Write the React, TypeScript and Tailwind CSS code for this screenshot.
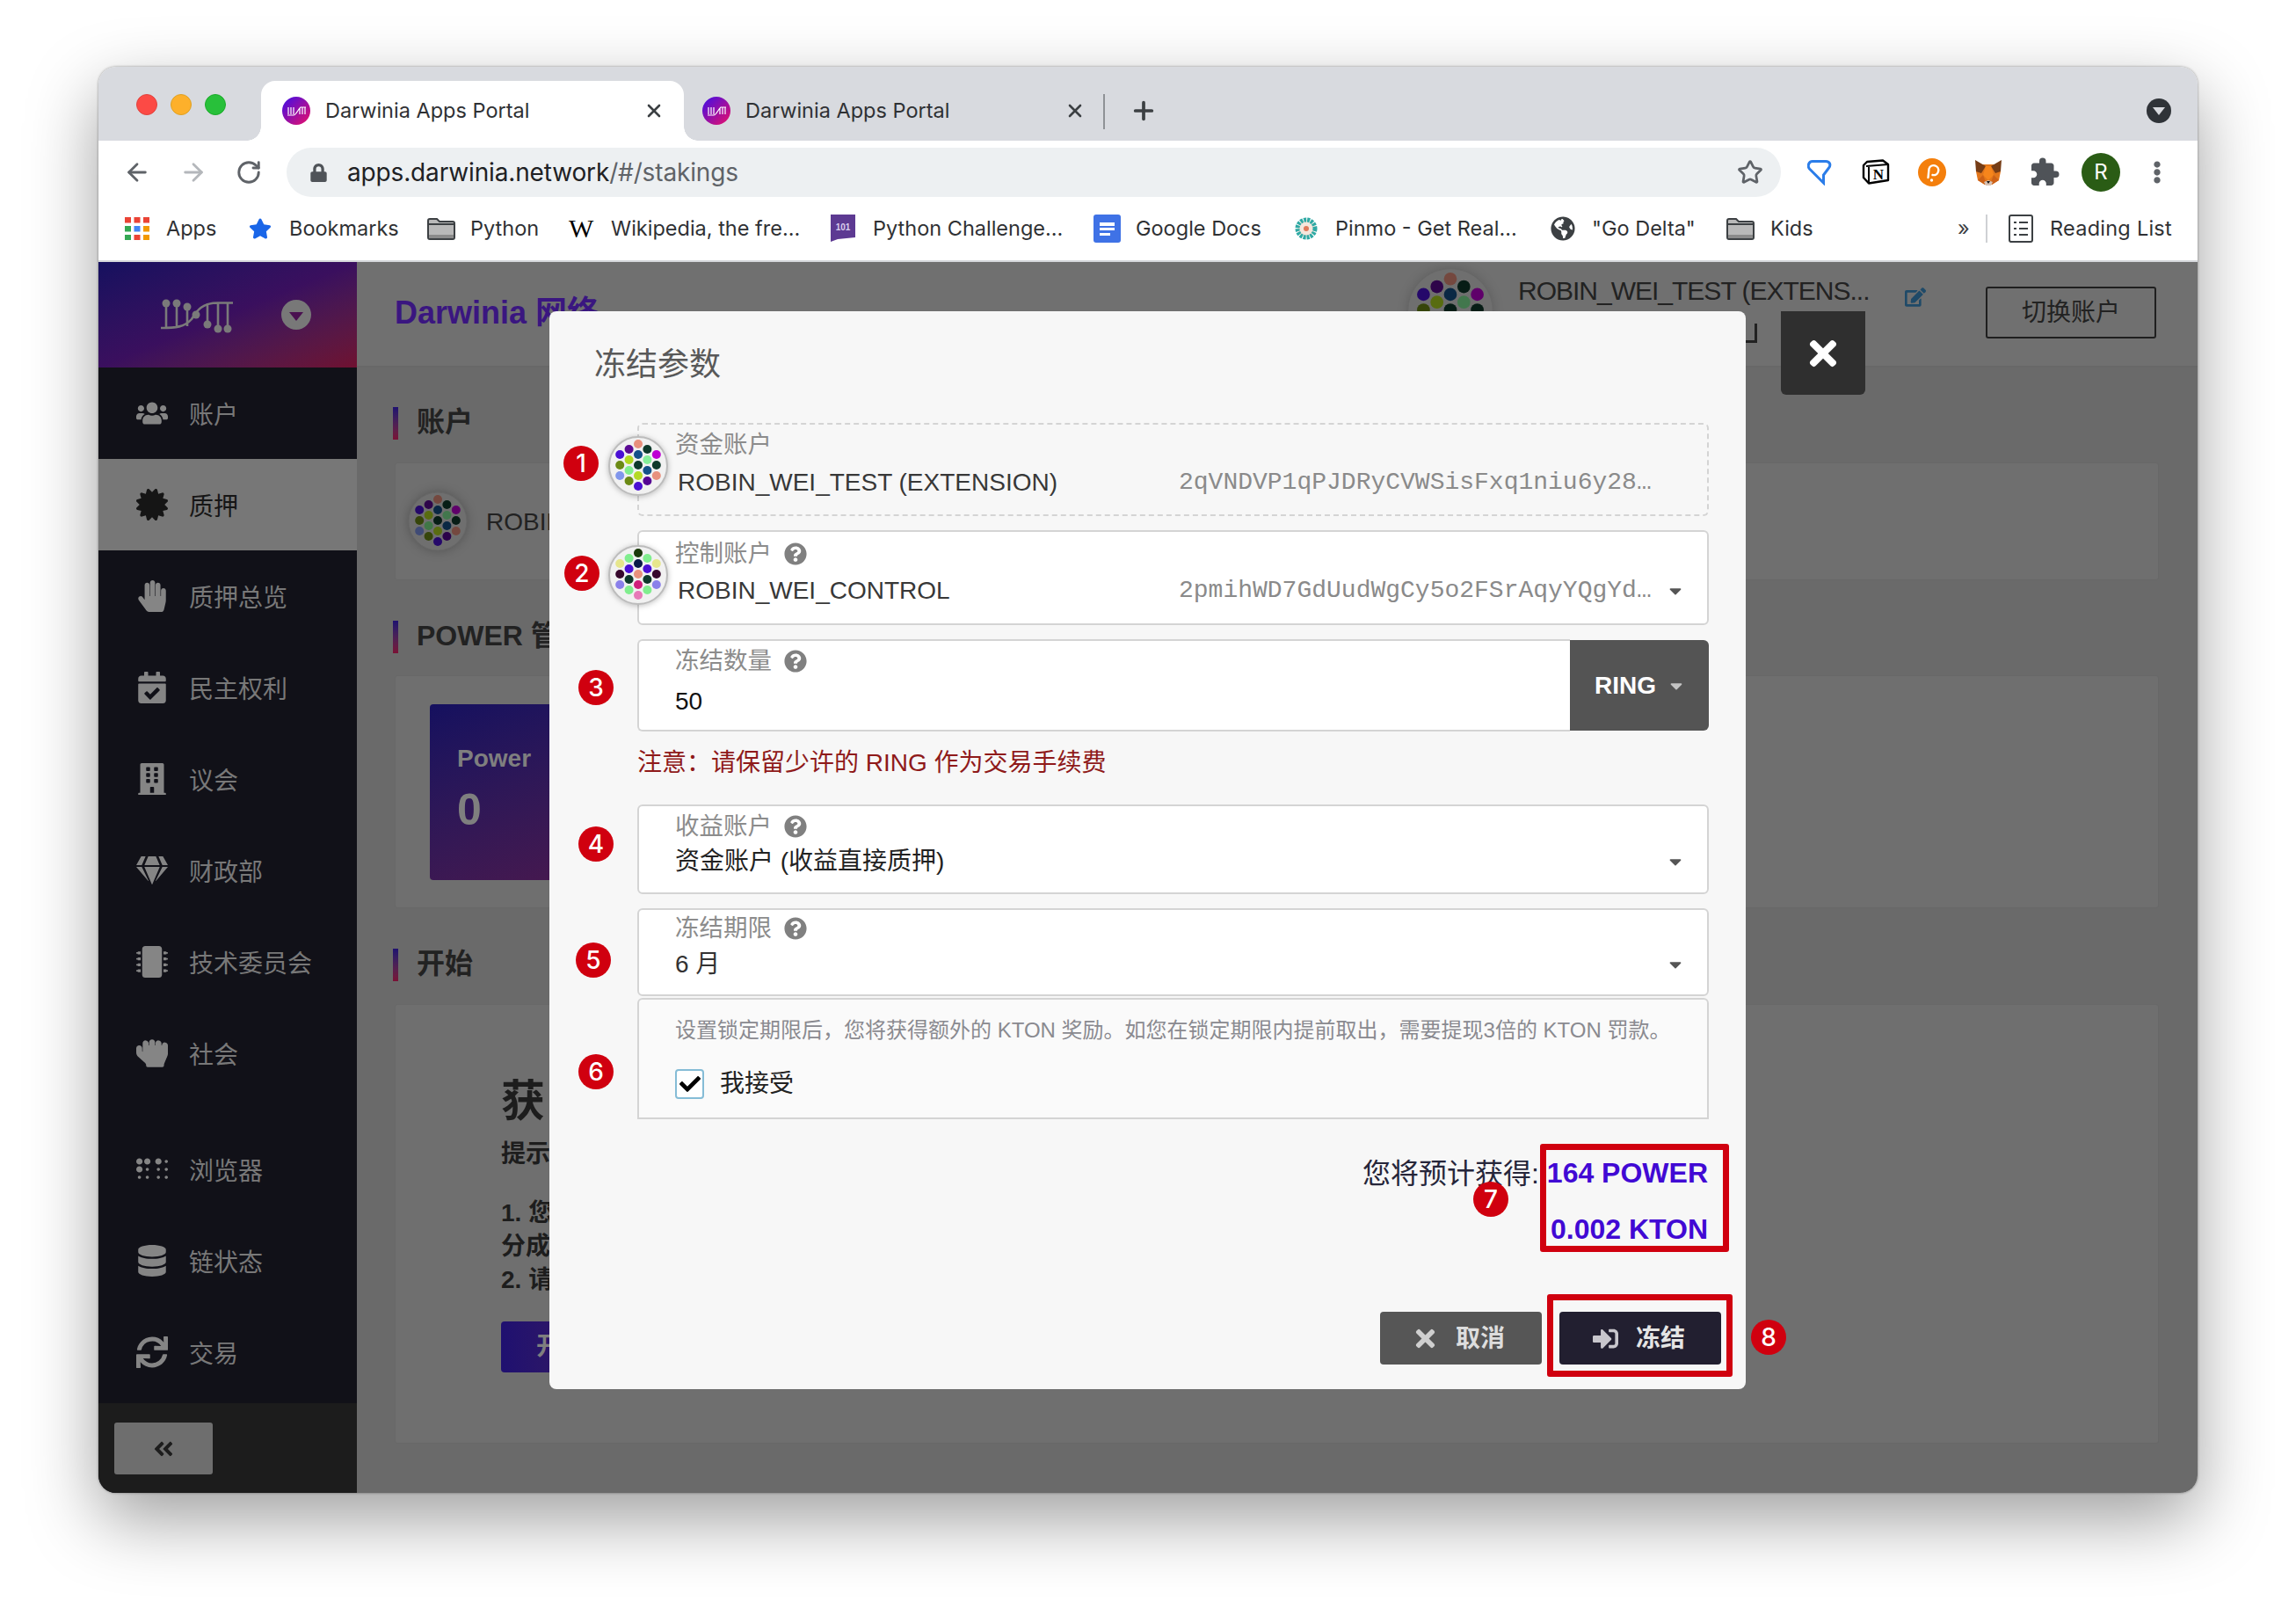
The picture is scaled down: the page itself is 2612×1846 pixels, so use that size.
import React from 'react';
import { ArrowLeft, ArrowRight, RotateCw, Star, X, Plus } from 'lucide-react';
import {
  FaUsers, FaCertificate, FaHandPaper, FaCalendarCheck, FaBuilding, FaGem, FaMicrochip, FaHandRock,
  FaBraille, FaDatabase, FaSync, FaAngleDoubleLeft, FaQuestionCircle, FaTimes, FaSignInAlt, FaEdit,
  FaCheck, FaCaretDown, FaStar, FaLock, FaGlobeAmericas, FaEllipsisV,
} from 'react-icons/fa';
import { MdExtension } from 'react-icons/md';

const DOT_POS: [number, number][] = [
  [34, 9], [34, 21], [34, 33], [34, 45], [34, 57],
  [23.6, 15], [23.6, 27], [23.6, 39], [23.6, 51],
  [44.4, 15], [44.4, 27], [44.4, 39], [44.4, 51],
  [13.2, 21], [13.2, 33], [13.2, 45],
  [54.8, 21], [54.8, 33], [54.8, 45],
];

const AVATAR_A = [
  '#e8917d', '#135189', '#0e3a2b', '#b4d925', '#4a0fd4',
  '#5b0a94', '#b0d820', '#80ee8e', '#6b8a15',
  '#0e3a2b', '#85ee9a', '#135189', '#560494',
  '#4a0fd4', '#6b8a15', '#8096ec',
  '#be00d4', '#0e3a2b', '#e8917d',
];

const AVATAR_B = [
  '#1a3a0a', '#0a1a4a', '#e8917d', '#d0207a', '#e77ab8',
  '#80ee8e', '#4a0fd4', '#0e3a2b', '#80ee8e',
  '#80ee8e', '#4a0fd4', '#0e3a2b', '#80ee8e',
  '#e6e68c', '#37082c', '#8a80ea',
  '#e6e68c', '#37082c', '#8a80ea',
];

function Identicon({ colors, className, dim }: { colors: string[]; className: string; dim?: boolean }) {
  return (
    <svg viewBox="0 0 68 68" className={className}>
      {dim ? (
        <circle cx="34" cy="34" r="33" fill="#6f6f6f" stroke="#676767" strokeWidth="1" />
      ) : (
        <circle cx="34" cy="34" r="33" fill="#f1f1f1" stroke="#bcbcbc" strokeWidth="2" />
      )}
      <g className={dim ? 'brightness-[0.5]' : ''}>
        {DOT_POS.map(([x, y], i) => (
          <circle key={i} cx={x} cy={y} r="5" fill={colors[i]} />
        ))}
      </g>
    </svg>
  );
}

function Favicon({ id }: { id: string }) {
  return (
    <svg viewBox="0 0 32 32" className="w-[32px] h-[32px] shrink-0">
      <defs>
        <linearGradient id={id} x1="0" y1="0" x2="1" y2="1">
          <stop offset="0" stopColor="#3d0ee8" />
          <stop offset="1" stopColor="#ec1068" />
        </linearGradient>
      </defs>
      <circle cx="16" cy="16" r="16" fill={`url(#${id})`} />
      <path d="M7 12v8M10 12v8M13 12v8M6 21h7c3 0 5-7 8-9h6M20 13v7M23 12v8M26 12v8" stroke="#fff" strokeWidth="1.2" fill="none" />
    </svg>
  );
}

function FolderIcon() {
  return (
    <svg viewBox="0 0 32 26" className="w-[32px] h-[26px] shrink-0">
      <path d="M1 4a2 2 0 0 1 2-2h8l3 3h15a2 2 0 0 1 2 2v16a2 2 0 0 1-2 2H3a2 2 0 0 1-2-2z" fill="#b9b9b9" stroke="#3c4043" strokeWidth="2" />
      <path d="M1 8h30" stroke="#3c4043" strokeWidth="2" />
      <path d="M2 20h28v4H2z" fill="#8b8b8b" />
    </svg>
  );
}

function AppsIcon() {
  const colors = ['#ea4335', '#ea4335', '#ea4335', '#34a853', '#4285f4', '#f29900', '#34a853', '#ea4335', '#f29900'];
  return (
    <svg viewBox="0 0 28 26" className="w-[28px] h-[26px] shrink-0">
      {colors.map((c, i) => (
        <rect key={i} x={(i % 3) * 10.5} y={Math.floor(i / 3) * 10} width="7" height="6.5" fill={c} />
      ))}
    </svg>
  );
}

function DocsIcon() {
  return (
    <svg viewBox="0 0 31 32" className="w-[31px] h-[32px] shrink-0">
      <rect width="31" height="32" rx="3" fill="#3f72e6" />
      <path d="M7 9h17v4H7zM7 15h17v3H7zM7 21h12v3H7z" fill="#fff" />
    </svg>
  );
}

function PinmoIcon() {
  return (
    <svg viewBox="0 0 26 28" className="w-[26px] h-[28px] shrink-0">
      <circle cx="13" cy="14" r="10" fill="#f5e6dc" stroke="#2fa9a4" strokeWidth="5" strokeDasharray="3 1" />
      <circle cx="13" cy="14" r="3" fill="#e0795a" />
    </svg>
  );
}

function PythonIcon() {
  return (
    <svg viewBox="0 0 28 32" className="w-[28px] h-[32px] shrink-0">
      <path d="M0 0h28v26l-20 2-8 3z" fill="#5d3a92" />
      <text x="14" y="18" textAnchor="middle" fontSize="10" fontWeight="700" fill="#d9cdec" fontFamily="Liberation Sans, sans-serif">101</text>
    </svg>
  );
}

function ReadingIcon() {
  return (
    <svg viewBox="0 0 28 32" className="w-[28px] h-[32px] shrink-0" fill="none" stroke="#3c4043" strokeWidth="2">
      <rect x="1" y="1" width="26" height="30" rx="2" />
      <path d="M6 9h3M12 9h10M6 16h3M12 16h10M6 23h3M12 23h10" />
    </svg>
  );
}

function PinExt() {
  return (
    <svg viewBox="0 0 28 29" className="w-[28px] h-[29px]" fill="none" stroke="#2b7de9" strokeWidth="3">
      <path d="M6 1.5H21C26 1.5 27 6 24.5 9L18.5 17V26L2.5 10C0 7 1.5 1.5 6 1.5Z" />
    </svg>
  );
}

function NotionExt() {
  return (
    <svg viewBox="0 0 32 30" className="w-[32px] h-[30px]">
      <path d="M6 3L24 1.5L30 6V24L8 27.5L2 21V7Z" fill="#fff" stroke="#000" strokeWidth="2.4" strokeLinejoin="round" />
      <path d="M5 8L30 6M8 27V9" stroke="#000" strokeWidth="2" fill="none" />
      <text x="19" y="23" textAnchor="middle" fontSize="17" fontWeight="700" fill="#000" fontFamily="Liberation Serif, serif">N</text>
    </svg>
  );
}

function PolkaExt() {
  return (
    <svg viewBox="0 0 32 32" className="w-[32px] h-[32px]">
      <circle cx="16" cy="16" r="16" fill="#f47f0c" />
      <path d="M11.5 22L12.5 12a5.5 5.5 0 1 1 4 7" stroke="#fff" strokeWidth="2.4" fill="none" strokeLinecap="round" />
      <circle cx="15.5" cy="25" r="1.7" fill="#fff" />
    </svg>
  );
}

function FoxExt() {
  return (
    <svg viewBox="0 0 32 30" className="w-[32px] h-[30px]">
      <path d="M2 14L8 6H24L30 14L28 24L20 29H12L4 24Z" fill="#e2761b" />
      <path d="M1 1L13 8L8 16L2 14ZM31 1L19 8L24 16L30 14Z" fill="#763d16" />
      <path d="M13 8H19L22 18L16 24L10 18Z" fill="#f6851b" />
      <path d="M4 24L10 18L13 26L12 29ZM28 24L22 18L19 26L20 29Z" fill="#cd6116" />
      <path d="M11 26L16 24L21 26L19 30H13Z" fill="#d7c1b3" />
      <path d="M14 25H18L16 28Z" fill="#161616" />
    </svg>
  );
}

function LogoMark() {
  return (
    <svg viewBox="0 0 90 45" className="w-[90px] h-[45px]" fill="none" stroke="#7a7a7a" strokeWidth="2.6">
      <path d="M9 9V37M21 9V37M33 13V35M56 9V33M68 9V38M79 9V38M3 37C20 37 30 36 38 27C44 17 50 8.5 68 8.5H85" />
      <g fill="#7a7a7a" stroke="none">
        <circle cx="9" cy="9" r="4.5" />
        <circle cx="21" cy="9" r="4.5" />
        <circle cx="33" cy="13" r="4.5" />
        <circle cx="43" cy="22" r="4.5" />
        <circle cx="56" cy="33" r="4.5" />
        <circle cx="68" cy="38" r="4.5" />
        <circle cx="79" cy="38" r="4.5" />
      </g>
    </svg>
  );
}

const BOOKMARKS = [
  { icon: <AppsIcon />, label: 'Apps', width: 'w-[141px]', gap: 'gap-[19px]' },
  { icon: <FaStar className="text-[#1a66e8] text-[26px] shrink-0" />, label: 'Bookmarks', width: 'w-[203px]', gap: 'gap-[20px]' },
  { icon: <FolderIcon />, label: 'Python', width: 'w-[161px]', gap: 'gap-[17px]' },
  { icon: <span className="w-[30px] font-['Liberation_Serif',serif] text-[30px] text-black shrink-0">W</span>, label: 'Wikipedia, the fre...', width: 'w-[298px]', gap: 'gap-[18px]' },
  { icon: <PythonIcon />, label: 'Python Challenge...', width: 'w-[299px]', gap: 'gap-[20px]' },
  { icon: <DocsIcon />, label: 'Google Docs', width: 'w-[229px]', gap: 'gap-[17px]' },
  { icon: <PinmoIcon />, label: 'Pinmo - Get Real...', width: 'w-[291px]', gap: 'gap-[20px]' },
  { icon: <FaGlobeAmericas className="text-[#3c4043] text-[28px] shrink-0" />, label: '"Go Delta"', width: 'w-[200px]', gap: 'gap-[19px]' },
  { icon: <FolderIcon />, label: 'Kids', width: 'w-[270px]', gap: 'gap-[18px]' },
];

const NAV = [
  { icon: <FaUsers />, label: '账户' },
  { icon: <FaCertificate />, label: '质押', active: true },
  { icon: <FaHandPaper />, label: '质押总览' },
  { icon: <FaCalendarCheck />, label: '民主权利' },
  { icon: <FaBuilding />, label: '议会' },
  { icon: <FaGem />, label: '财政部' },
  { icon: <FaMicrochip />, label: '技术委员会' },
  { icon: <FaHandRock />, label: '社会' },
  { icon: <FaBraille />, label: '浏览器', spaced: true },
  { icon: <FaDatabase />, label: '链状态' },
  { icon: <FaSync />, label: '交易' },
];

const BADGES = [
  { n: 1, pos: 'left-[16px] top-[153px]' },
  { n: 2, pos: 'left-[17px] top-[278px]' },
  { n: 3, pos: 'left-[33px] top-[408px]' },
  { n: 4, pos: 'left-[33px] top-[586px]' },
  { n: 5, pos: 'left-[30px] top-[718px]' },
  { n: 6, pos: 'left-[33px] top-[845px]' },
  { n: 7, pos: 'left-[1051px] top-[990px]' },
  { n: 8, pos: 'left-[1367px] top-[1147px]' },
];

function Help() {
  return <FaQuestionCircle className="text-[#808080] text-[26px] ml-[14px] shrink-0" />;
}

function Caret({ className }: { className: string }) {
  return <FaCaretDown className={`text-[22px] shrink-0 ${className}`} />;
}

function Label({ text, help }: { text: string; help?: boolean }) {
  return (
    <div className="flex items-center h-[30px] text-[27.5px] text-[#8c8c8c] leading-none">
      {text}
      {help && <Help />}
    </div>
  );
}

function SectionTitle({ title }: { title: string }) {
  return (
    <div className="flex items-center h-[37px] gap-[21px] overflow-hidden whitespace-nowrap">
      <div className="w-[6px] h-[37px] bg-gradient-to-b from-[#1f1070] to-[#7a1035]" />
      <span className="text-[32px] font-bold text-[#222222] pb-[3px]">{title}</span>
    </div>
  );
}

export default function App() {
  return (
    <div className="w-[2612px] h-[1846px] bg-white pt-[76px] pl-[112px] font-['Liberation_Sans','Noto_Sans_CJK_SC',sans-serif] overflow-hidden">
      <div className="relative w-[2388px] h-[1622px] rounded-[20px] flex flex-col shadow-[0_30px_80px_rgba(0,0,0,0.38),0_0_3px_rgba(0,0,0,0.4)] bg-white">
        {/* tab strip */}
        <div className="h-[84px] bg-[#d8dadf] rounded-t-[20px] flex items-end font-['Inter','Noto_Sans_CJK_SC',sans-serif] text-[23.5px] text-[#2f3134] shrink-0">
          <div className="w-[185px] h-[68px] pb-[14px] pl-[43px] flex items-center gap-[15px]">
            <div className="w-[24px] h-[24px] rounded-full bg-[#fc4a45] border border-[#e0443e]" />
            <div className="w-[24px] h-[24px] rounded-full bg-[#fdb02b] border border-[#dea123]" />
            <div className="w-[24px] h-[24px] rounded-full bg-[#28c03a] border border-[#1aab29]" />
          </div>
          <div className="relative w-[481px] h-[68px] bg-white rounded-t-[16px] flex items-center pl-[24px] pr-[22px]">
            <div className="absolute -left-[16px] bottom-0 w-[16px] h-[16px] bg-[radial-gradient(circle_at_0_0,transparent_15.5px,white_16px)]" />
            <div className="absolute -right-[16px] bottom-0 w-[16px] h-[16px] bg-[radial-gradient(circle_at_100%_0,transparent_15.5px,white_16px)]" />
            <Favicon id="fav-a" />
            <span className="ml-[17px]">Darwinia Apps Portal</span>
            <X className="ml-auto w-[24px] h-[24px] text-[#3c4043]" strokeWidth={2.6} />
          </div>
          <div className="w-[477px] h-[68px] flex items-center pl-[21px] pr-[20px]">
            <Favicon id="fav-b" />
            <span className="ml-[17px]">Darwinia Apps Portal</span>
            <X className="ml-auto w-[24px] h-[24px] text-[#3c4043]" strokeWidth={2.6} />
          </div>
          <div className="w-[2px] h-[40px] bg-[#8f9296] mb-[13px]" />
          <div className="h-[68px] flex items-center ml-[28px]">
            <Plus className="w-[32px] h-[32px] text-[#3c4043]" strokeWidth={2.8} />
          </div>
          <div className="ml-auto h-[68px] pr-[30px] flex items-center">
            <div className="w-[28px] h-[28px] rounded-full bg-[#2f3338] flex items-center justify-center">
              <div className="w-0 h-0 border-l-[7px] border-r-[7px] border-t-[9px] border-l-transparent border-r-transparent border-t-[#d8dadf]" />
            </div>
          </div>
        </div>

        {/* toolbar */}
        <div className="h-[72px] bg-white flex items-center shrink-0 font-['Inter','Noto_Sans_CJK_SC',sans-serif]">
          <div className="pl-[28px] flex items-center gap-[32px]">
            <ArrowLeft className="w-[32px] h-[32px] text-[#5f6368]" strokeWidth={2.1} />
            <ArrowRight className="w-[32px] h-[32px] text-[#b4b7bb]" strokeWidth={2.1} />
            <RotateCw className="w-[30px] h-[30px] text-[#5f6368]" strokeWidth={2.3} />
          </div>
          <div className="ml-[28px] w-[1700px] h-[56px] rounded-[28px] bg-[#edf0f2] flex items-center pl-[26px] pr-[20px]">
            <FaLock className="text-[#4f5358] text-[21px] shrink-0" />
            <span className="ml-[22px] text-[28px] tracking-[-0.15px] text-[#202124]">
              apps.darwinia.network<span className="text-[#5f6368]">/#/stakings</span>
            </span>
            <Star className="ml-auto w-[30px] h-[30px] text-[#5f6368]" strokeWidth={2.2} />
          </div>
          <div className="ml-[12px] flex items-center">
            <div className="w-[64px] flex justify-center"><PinExt /></div>
            <div className="w-[64px] flex justify-center"><NotionExt /></div>
            <div className="w-[64px] flex justify-center"><PolkaExt /></div>
            <div className="w-[64px] flex justify-center"><FoxExt /></div>
            <div className="w-[64px] flex justify-center"><MdExtension className="text-[#4f5358] text-[36px]" /></div>
            <div className="w-[64px] flex justify-center">
              <div className="w-[44px] h-[44px] rounded-full bg-[#2a5c15] text-white text-[24px] leading-[44px] text-center">R</div>
            </div>
            <div className="w-[64px] flex justify-center"><FaEllipsisV className="text-[#5f6368] text-[26px]" /></div>
          </div>
        </div>

        {/* bookmarks */}
        <div className="h-[66px] bg-white border-b-2 border-[#d5d7db] flex items-center pl-[30px] pb-[9px] text-[23.5px] text-[#2f3134] font-['Inter','Noto_Sans_CJK_SC',sans-serif] whitespace-nowrap shrink-0">
          {BOOKMARKS.map((b) => (
            <div key={b.label} className={`flex items-center ${b.width} ${b.gap}`}>
              {b.icon}
              <span>{b.label}</span>
            </div>
          ))}
          <span className="ml-[-7px] w-[30px] text-[#3c4043]">»</span>
          <div className="w-[2px] h-[32px] bg-[#cfd1d4] ml-[2px]" />
          <div className="ml-[24px] flex items-center gap-[19px]">
            <ReadingIcon />
            <span className="tracking-[0.25px]">Reading List</span>
          </div>
        </div>

        {/* page */}
        <div className="flex flex-1 min-h-0 overflow-hidden rounded-b-[20px]">
          <div className="w-[294px] bg-[#111118] flex flex-col shrink-0">
            <div className="h-[120px] bg-gradient-to-br from-[#15105f] via-[#3a0f5e] to-[#6f1030] flex items-center shrink-0">
              <div className="ml-[68px]"><LogoMark /></div>
              <div className="ml-[50px] w-[34px] h-[34px] rounded-full bg-[#787878] flex items-center justify-center">
                <div className="w-0 h-0 mt-[3px] border-l-[8px] border-r-[8px] border-t-[10px] border-l-transparent border-r-transparent border-t-[#4a1050]" />
              </div>
            </div>
            {NAV.map((item) => (
              <div
                key={item.label}
                className={`flex items-center h-[104px] shrink-0 text-[28px] ${item.active ? 'bg-[#777777] text-[#161616]' : 'text-[#787878]'} ${item.spaced ? 'mt-[28px]' : ''}`}
              >
                <div className={`w-[54px] ml-[34px] flex justify-center text-[36px] ${item.active ? 'text-[#151515]' : 'text-[#858585]'}`}>
                  {item.icon}
                </div>
                <span className="ml-[15px] pt-[5px]">{item.label}</span>
              </div>
            ))}
            <div className="mt-auto h-[102px] bg-[#1c1c1c] pl-[18px] pt-[22px]">
              <div className="w-[112px] h-[59px] bg-[#6e6e6e] rounded-[3px] flex items-center justify-center">
                <FaAngleDoubleLeft className="text-[#1d1d1d] text-[26px]" />
              </div>
            </div>
          </div>

          <div className="flex-1 bg-[#6a6a6a] flex flex-col min-w-0">
            <div className="h-[120px] bg-[#707070] border-b-2 border-[#686868] flex shrink-0">
              <span className="self-center ml-[43px] text-[36px] font-bold text-[#3a1680] mb-[2px] whitespace-nowrap">Darwinia 网络</span>
              <div className="ml-auto flex items-start">
                <Identicon dim colors={AVATAR_A} className="w-[100px] h-[100px] mt-[6px] drop-shadow-[0_0_6px_rgba(0,0,0,0.15)]" />
                <div className="ml-[27px] w-[400px] mt-[13px]">
                  <div className="h-[40px] text-[30px] leading-[40px] text-[#222222] tracking-[-1px] whitespace-nowrap">ROBIN_WEI_TEST (EXTENS...</div>
                  <div className="ml-[258px] mt-[17px] w-[14px] h-[22px] border-r-[3px] border-b-[3px] border-[#222222]" />
                </div>
                <FaEdit className="ml-[40px] mt-[28px] text-[#1f4a68] text-[24px]" />
                <div className="ml-[68px] mr-[47px] mt-[28px] w-[194px] h-[59px] border-2 border-[#1f1f1f] rounded-[3px] flex items-center justify-center text-[28px] text-[#222222]">
                  切换账户
                </div>
              </div>
            </div>
            <div className="pl-[41px] pr-[44px] pt-[45px] flex flex-col">
              <SectionTitle title="账户" />
              <div className="ml-[2px] mt-[26px] h-[134px] bg-[#6f6f6f] border border-[#686868] rounded-[3px] flex items-center pl-[14px]">
                <Identicon dim colors={AVATAR_A} className="w-[68px] h-[68px] drop-shadow-[0_0_6px_rgba(0,0,0,0.25)]" />
                <span className="ml-[21px] pt-[2px] text-[28px] text-[#222222]">ROBIN_WEI_TEST</span>
              </div>
              <div className="mt-[46px]"><SectionTitle title="POWER 管理" /></div>
              <div className="ml-[2px] mt-[25px] h-[265px] bg-[#6f6f6f] border border-[#686868] rounded-[3px] pl-[39px] pt-[32px]">
                <div className="w-[520px] h-[200px] rounded-[4px] bg-gradient-to-br from-[#15105f] to-[#5f1045] pl-[31px] pt-[44px] flex flex-col">
                  <span className="text-[28px] font-bold text-[#7f7f7f] leading-[36px]">Power</span>
                  <span className="text-[50px] font-bold text-[#7f7f7f] leading-[60px] mt-[10px]">0</span>
                </div>
              </div>
              <div className="mt-[46px]"><SectionTitle title="开始" /></div>
              <div className="ml-[2px] mt-[26px] h-[500px] bg-[#6f6f6f] border border-[#686868] rounded-[3px] pl-[120px] pt-[80px] text-[#1d1d1d] font-bold">
                <div className="text-[50px] leading-[60px]">获</div>
                <div className="text-[28px] leading-[36px] mt-[12px]">提示</div>
                <div className="text-[28px] leading-[38px] mt-[30px]">
                  1. 您<br />
                  分成<br />
                  2. 请
                </div>
                <div className="mt-[28px] w-[300px] h-[58px] rounded-[4px] bg-gradient-to-r from-[#1f1070] to-[#5f1045] text-[#7f7f7f] text-[28px] leading-[58px] pl-[40px]">
                  开始
                </div>
              </div>
            </div>
          </div>
        </div>

        {/* modal close button */}
        <div className="absolute left-[1914px] top-[278px] w-[96px] h-[95px] bg-[#2f2f2f] rounded-b-[6px] flex items-center justify-center">
          <FaTimes className="text-white text-[44px]" />
        </div>

        {/* modal */}
        <div className="absolute left-[513px] top-[278px] w-[1361px] h-[1226px] bg-[#f7f7f7] rounded-[8px] text-[#333333]">
          <div className="h-[127px] pl-[51px] pt-[35px] text-[36px] leading-[52px] text-[#595959]">冻结参数</div>

          <div className="ml-[100px] w-[1219px] flex flex-col">
            <div className="h-[106px] rounded-[6px] border-2 border-dashed border-[#d4d4d4] pl-[41px] pr-[30px] pt-[8px]">
              <Label text="资金账户" />
              <div className="mt-[11px] h-[34px] flex items-center whitespace-nowrap">
                <span className="w-[573px] pl-[3px] text-[28px] text-[#383838]">ROBIN_WEI_TEST (EXTENSION)</span>
                <span className="font-['Liberation_Mono',monospace] text-[28px] text-[#8a8a8a]">2qVNDVP1qPJDRyCVWSisFxq1niu6y28…</span>
              </div>
            </div>

            <div className="mt-[16px] h-[108px] rounded-[6px] border-2 border-[#d4d4d4] bg-white pl-[41px] pr-[25px] pt-[10px]">
              <Label text="控制账户" help />
              <div className="mt-[10px] h-[34px] flex items-center whitespace-nowrap">
                <span className="w-[573px] pl-[3px] text-[28px] text-[#383838]">ROBIN_WEI_CONTROL</span>
                <span className="font-['Liberation_Mono',monospace] text-[28px] text-[#8a8a8a]">2pmihWD7GdUudWgCy5o2FSrAqyYQgYd…</span>
                <Caret className="ml-auto text-[#555555]" />
              </div>
            </div>

            <div className="mt-[16px] h-[105px] flex">
              <div className="flex-1 rounded-l-[6px] border-2 border-r-0 border-[#d4d4d4] bg-white pl-[41px] pt-[8px]">
                <Label text="冻结数量" help />
                <div className="mt-[14px] h-[34px] flex items-center text-[28px] text-[#111111]">50</div>
              </div>
              <div className="w-[158px] my-[1px] rounded-r-[6px] bg-[#545454] flex items-center justify-end pr-[26px] gap-[12px]">
                <span className="text-[28px] font-bold text-white">RING</span>
                <Caret className="text-[#c4c4c4]" />
              </div>
            </div>

            <div className="mt-[18px] h-[36px] text-[28px] leading-[36px] text-[#8f1a1a] whitespace-nowrap">注意：请保留少许的 RING 作为交易手续费</div>

            <div className="mt-[29px] h-[102px] rounded-[6px] border-2 border-[#d4d4d4] bg-white pl-[41px] pr-[25px] pt-[8px]">
              <Label text="收益账户" help />
              <div className="mt-[8px] h-[34px] flex items-center text-[28px] text-[#222222]">
                资金账户 (收益直接质押)
                <Caret className="ml-auto text-[#555555]" />
              </div>
            </div>

            <div className="mt-[16px] h-[100px] rounded-[6px] border-2 border-[#d4d4d4] bg-white pl-[41px] pr-[25px] pt-[6px]">
              <Label text="冻结期限" help />
              <div className="mt-[9px] h-[34px] flex items-center text-[28px] text-[#333333]">
                6 月
                <Caret className="ml-auto text-[#555555]" />
              </div>
            </div>

            <div className="mt-[2px] h-[138px] rounded-t-[6px] border-2 border-[#d4d4d4] bg-[#fafafa] pl-[41px] pt-[19px]">
              <div className="h-[32px] text-[24px] leading-[32px] text-[#8a8a90] whitespace-nowrap">设置锁定期限后，您将获得额外的 KTON 奖励。如您在锁定期限内提前取出，需要提现3倍的 KTON 罚款。</div>
              <div className="mt-[24px] flex items-center">
                <div className="w-[33px] h-[34px] rounded-[4px] border-2 border-[#85bcd6] bg-white flex items-center justify-center">
                  <FaCheck className="text-black text-[24px]" />
                </div>
                <span className="ml-[18px] text-[28px] text-[#222222]">我接受</span>
              </div>
            </div>
          </div>

          <div className="mt-[28px] pr-[19px] flex justify-end">
            <div className="mt-[14px] mr-[1px] h-[40px] text-[32px] leading-[40px] text-[#26263a] whitespace-nowrap">您将预计获得:</div>
            <div className="w-[215px] h-[123px] border-[7px] border-[#d0000f] rounded-[3px] pr-[17px] pt-[6px] flex flex-col items-end gap-[24px] text-[32px] font-bold leading-[40px] text-[#4109d4] whitespace-nowrap">
              <span>164 POWER</span>
              <span>0.002 KTON</span>
            </div>
          </div>

          <div className="mt-[48px] pr-[15px] flex justify-end items-start">
            <div className="mt-[20px] mr-[6px] w-[184px] h-[60px] rounded-[4px] bg-[#565656] flex items-center pl-[36px] gap-[19px] text-[28px] font-bold text-[#dddddd]">
              <FaTimes className="text-[#cfcfcf] text-[31px]" />
              <span className="pt-[2px]">取消</span>
            </div>
            <div className="w-[211px] h-[94px] border-[7px] border-[#d0000f] rounded-[3px] pl-[7px] pt-[13px]">
              <div className="w-[184px] h-[60px] rounded-[4px] bg-[#221f30] flex items-center pl-[38px] gap-[20px] text-[28px] font-bold text-[#e4e4e4]">
                <FaSignInAlt className="text-[#c8c6cc] text-[29px]" />
                <span className="pt-[2px]">冻结</span>
              </div>
            </div>
          </div>

          <Identicon colors={AVATAR_A} className="absolute left-[67px] top-[142px] w-[68px] h-[68px] drop-shadow-[0_1px_3px_rgba(0,0,0,0.25)]" />
          <Identicon colors={AVATAR_B} className="absolute left-[67px] top-[266px] w-[68px] h-[68px] drop-shadow-[0_1px_3px_rgba(0,0,0,0.25)]" />
          {BADGES.map((b) => (
            <div key={b.n} className={`absolute ${b.pos} w-[40px] h-[40px] rounded-full bg-[#d0000f] text-white text-[28px] font-['Inter',sans-serif] font-medium leading-[40px] text-center`}>
              {b.n}
            </div>
          ))}
        </div>
      </div>
    </div>
  );
}
